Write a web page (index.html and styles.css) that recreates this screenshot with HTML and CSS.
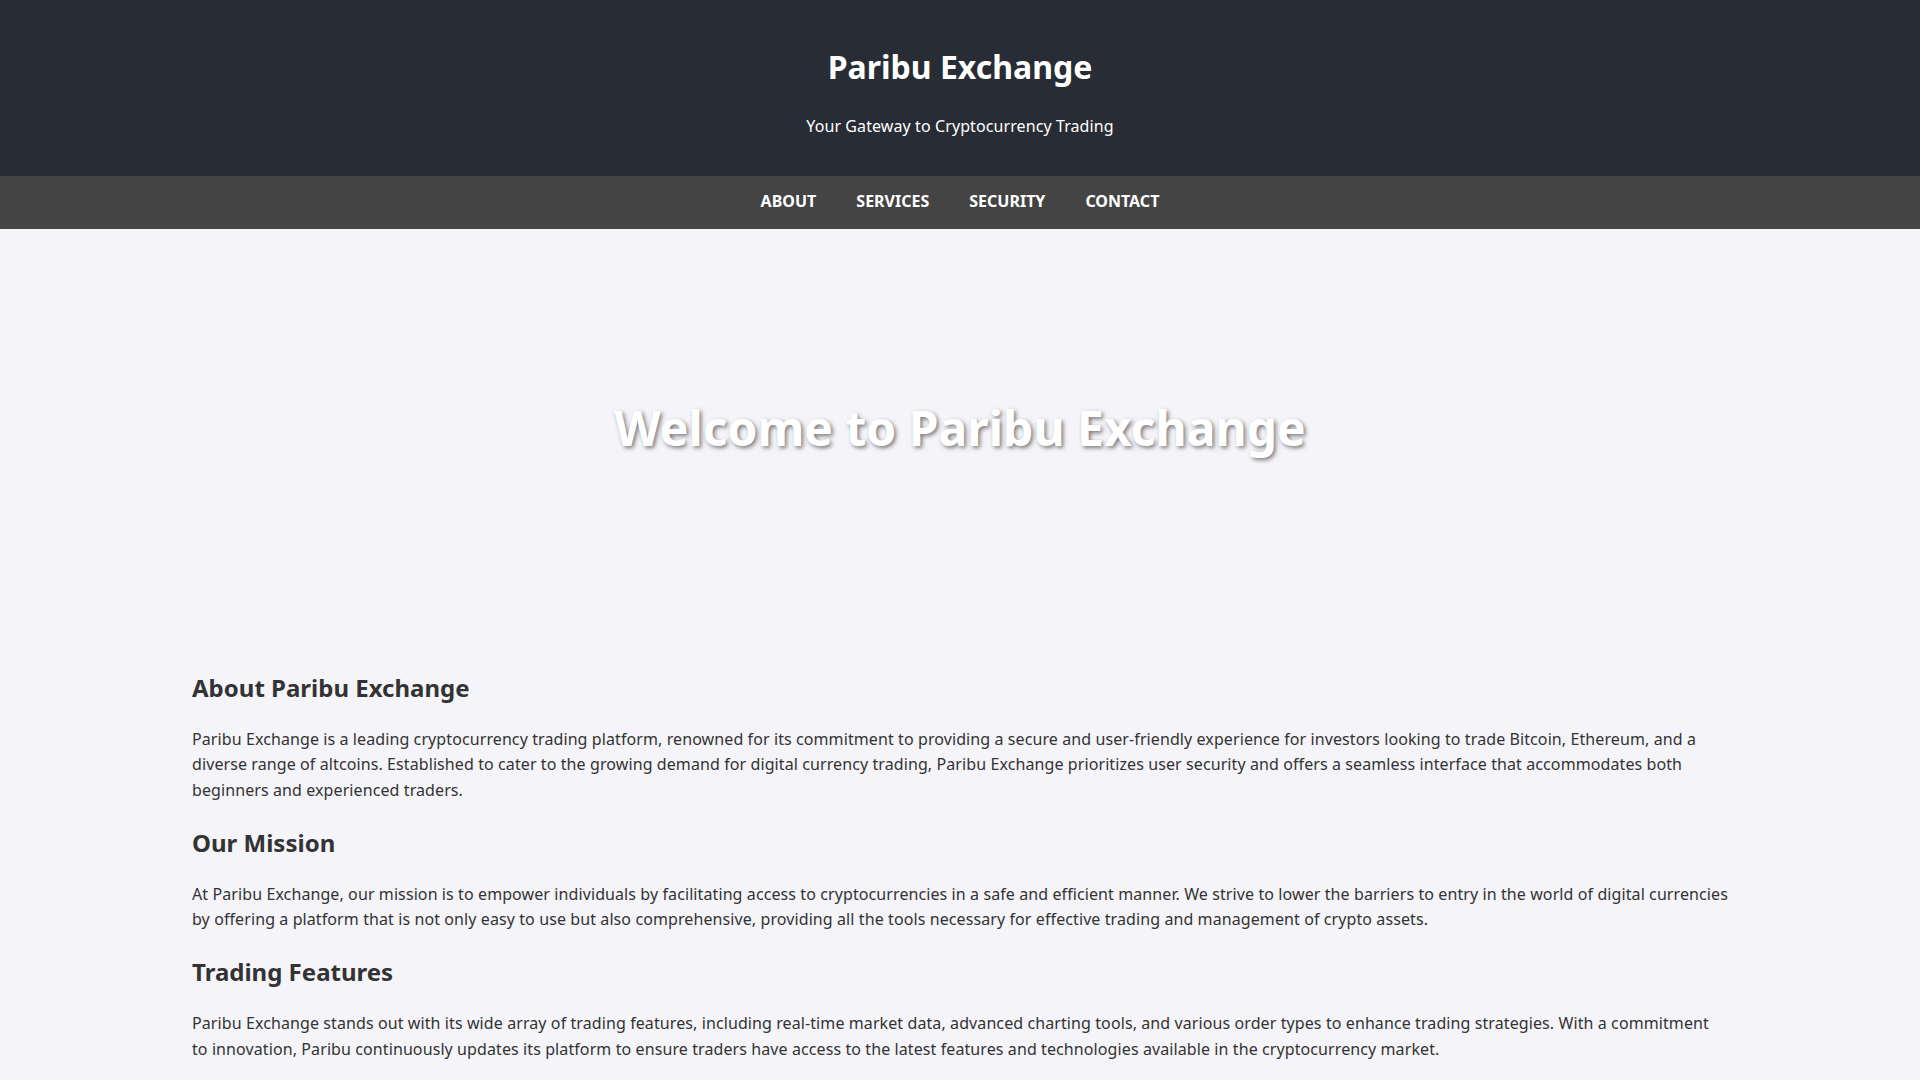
FILE: index.html
```html
<!DOCTYPE html>
<html lang="en">
<head>
<meta charset="utf-8">
<title>Paribu Exchange</title>
<link rel="stylesheet" href="styles.css">
</head>
<body>
<header class="site-header">
  <h1 class="site-title">Paribu Exchange</h1>
  <p class="site-tagline">Your Gateway to Cryptocurrency Trading</p>
</header>
<nav class="site-nav">
  <a href="#about">About</a>
  <a href="#services">Services</a>
  <a href="#security">Security</a>
  <a href="#contact">Contact</a>
</nav>
<section class="hero">
  <h2 class="hero-title">Welcome to Paribu Exchange</h2>
</section>
<main class="content">
  <h2 id="about">About Paribu Exchange</h2>
  <p>Paribu Exchange is a leading cryptocurrency trading platform, renowned for its commitment to providing a secure and user-friendly experience for investors looking to trade Bitcoin, Ethereum, and a diverse range of altcoins. Established to cater to the growing demand for digital currency trading, Paribu Exchange prioritizes user security and offers a seamless interface that accommodates both beginners and experienced traders.</p>
  <h2>Our Mission</h2>
  <p>At Paribu Exchange, our mission is to empower individuals by facilitating access to cryptocurrencies in a safe and efficient manner. We strive to lower the barriers to entry in the world of digital currencies by offering a platform that is not only easy to use but also comprehensive, providing all the tools necessary for effective trading and management of crypto assets.</p>
  <h2 id="services">Trading Features</h2>
  <p>Paribu Exchange stands out with its wide array of trading features, including real-time market data, advanced charting tools, and various order types to enhance trading strategies. With a commitment to innovation, Paribu continuously updates its platform to ensure traders have access to the latest features and technologies available in the cryptocurrency market.</p>
</main>
</body>
</html>
```

FILE: styles.css
```css
html, body {
  margin: 0;
  padding: 0;
}
body {
  font-family: "Noto Sans", "Open Sans", sans-serif;
  font-size: 16px;
  line-height: 1.6;
  color: #333;
  background: #f4f4f9;
}
p {
  letter-spacing: 0.095px;
}
.site-header {
  background: #282c35;
  color: #fff;
  text-align: center;
  padding: 20px 0;
}
.site-title {
  font-size: 32px;
  font-weight: 700;
  margin: 21.44px 0;
}
.site-tagline {
  margin: 16px 0;
}
.site-nav {
  background: #444;
  display: flex;
  justify-content: center;
  padding: 13.7px 0;
}
.site-nav a {
  color: #fff;
  text-decoration: none;
  text-transform: uppercase;
  font-weight: 700;
  margin: 0 20px;
}
.hero {
  height: 400px;
  display: flex;
  align-items: center;
  justify-content: center;
}
.hero-title {
  font-size: 48px;
  font-weight: 700;
  color: #fff;
  margin: 0;
  text-shadow: 2px 2px 4px rgba(0, 0, 0, 0.5);
}
.content {
  width: 80%;
  margin: 0 auto;
  padding: 20px 0;
}
.content h2 {
  font-size: 24px;
  margin: 19.92px 0;
}
.content p {
  margin: 16px 0;
}
```
